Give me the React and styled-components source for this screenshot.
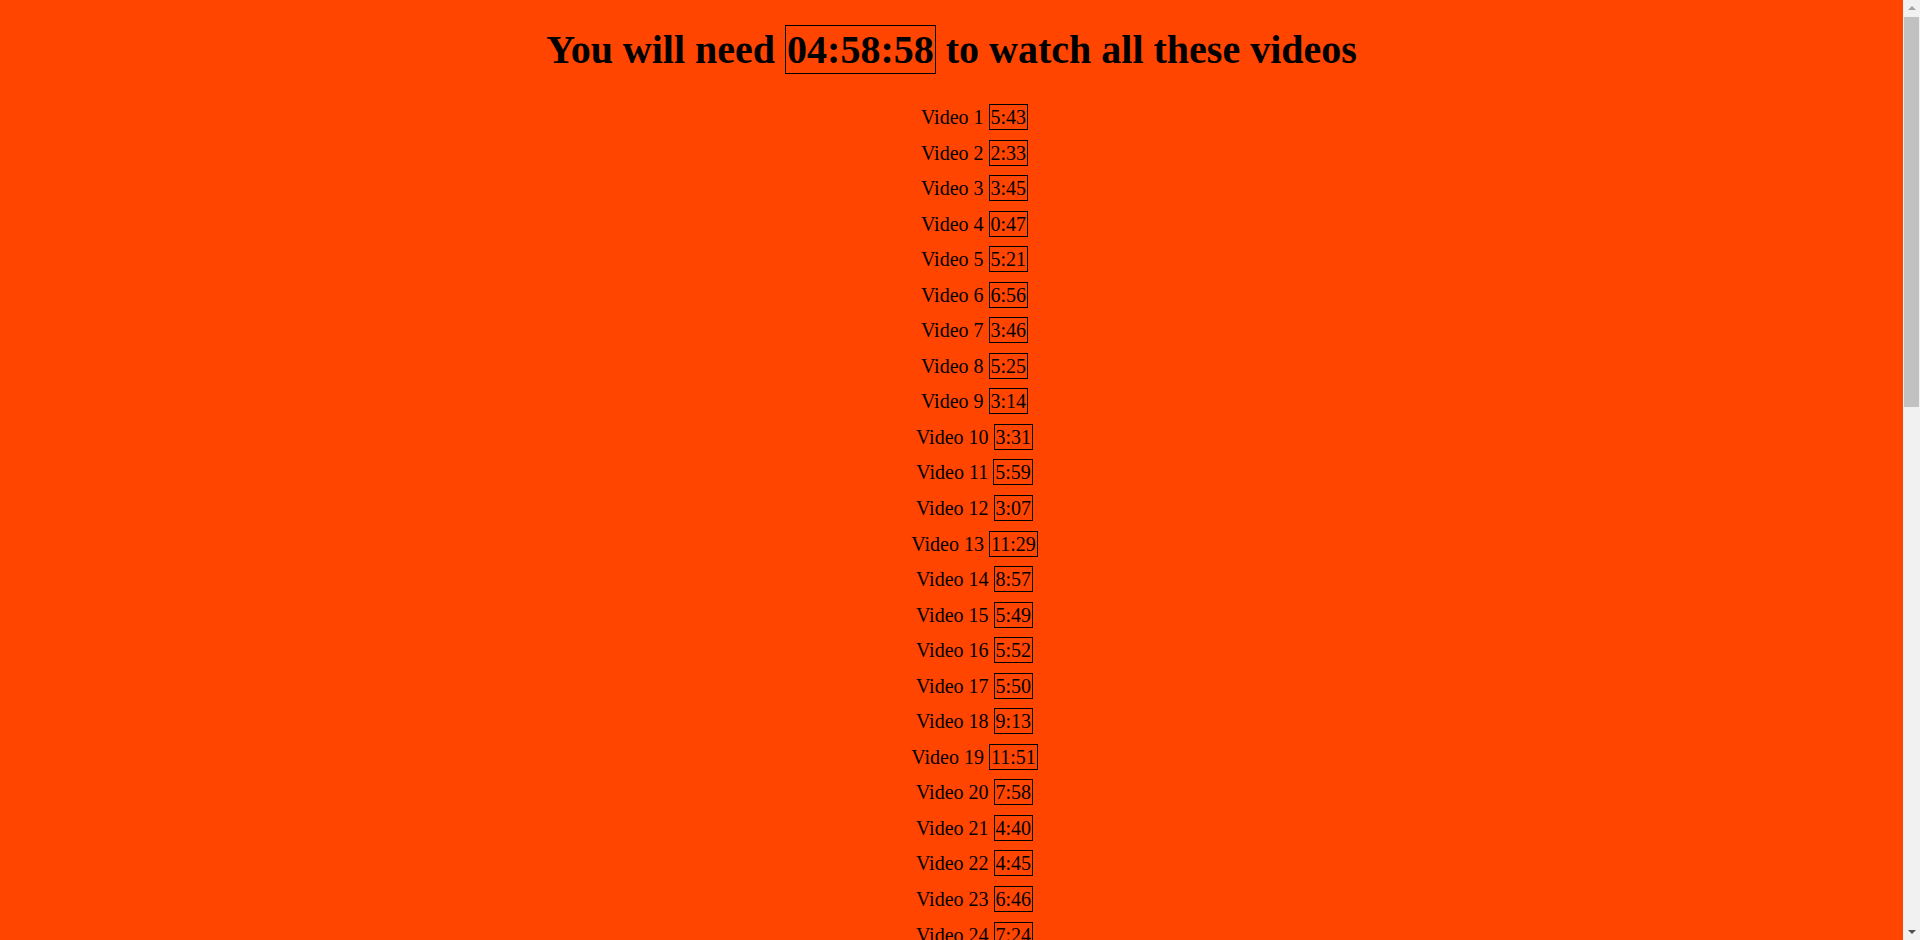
// App.jsx
import React from "react";
import styled, { createGlobalStyle } from "styled-components";

const GlobalStyle = createGlobalStyle`
  body {
    margin: 8px;
    padding-right: 17px;
    background: #ff4500;
    font-family: "Liberation Serif", "Times New Roman", serif;
    color: #000;
  }
`;

const Page = styled.main`
  text-align: center;
`;

const Title = styled.h1`
  font-size: 40px;
  font-weight: bold;
  margin: 18px 0 27px;
  line-height: normal;
`;

const TimeBox = styled.span`
  border: 1px solid #000;
  padding: 1px 1px;
`;

const List = styled.ul`
  list-style: none;
  margin: 0;
  padding-left: 46px;
  font-size: 20px;
`;

const Row = styled.li`
  line-height: 35.55px;
`;

/* window scrollbar as seen in the capture */
const ScrollRail = styled.div`
  position: fixed;
  top: 0;
  right: 0;
  width: 17px;
  height: 100vh;
  background: #f1f1f1;
  display: flex;
  flex-direction: column;
  align-items: center;
`;

const Arrow = styled.div`
  width: 0;
  height: 0;
  margin: 6px 0;
  border-left: 4px solid transparent;
  border-right: 4px solid transparent;
  ${(p) =>
    p.$down
      ? "border-top: 4px solid #505050; margin-top: auto;"
      : "border-bottom: 4px solid #a3a3a3;"}
`;

const Thumb = styled.div`
  width: 15px;
  height: 390px;
  margin-top: 1px;
  background: #c1c1c1;
`;

const durations = [
  "5:43", "2:33", "3:45", "0:47", "5:21", "6:56", "3:46", "5:25", "3:14", "3:31",
  "5:59", "3:07", "11:29", "8:57", "5:49", "5:52", "5:50", "9:13", "11:51", "7:58",
  "4:40", "4:45", "6:46", "7:24", "4:12", "6:03", "2:58", "5:17", "3:39", "7:05",
  "4:26", "1:54", "6:31", "3:22", "5:08", "9:47", "2:16", "4:55", "3:03", "6:18",
  "5:36", "2:41", "4:04", "8:12", "3:50", "1:27", "5:44", "4:33", "2:09", "6:42",
  "3:16", "4:48", "5:02", "2:37", "3:58", "4:21", "12:23",
];

const toSeconds = (s) => {
  const [m, sec] = s.split(":").map(Number);
  return m * 60 + sec;
};

const pad = (n) => String(n).padStart(2, "0");

const formatTotal = (total) => {
  const h = Math.floor(total / 3600);
  const m = Math.floor((total % 3600) / 60);
  const s = total % 60;
  return `${pad(h)}:${pad(m)}:${pad(s)}`;
};

const App = () => {
  const total = durations.reduce((sum, d) => sum + toSeconds(d), 0);

  return (
    <Page>
      <GlobalStyle />
      <Title>
        You will need <TimeBox>{formatTotal(total)}</TimeBox> to watch all
        these videos
      </Title>
      <List>
        {durations.map((d, i) => (
          <Row key={i}>
            Video {i + 1} <TimeBox>{d}</TimeBox>
          </Row>
        ))}
      </List>
      <ScrollRail aria-hidden="true">
        <Arrow />
        <Thumb />
        <Arrow $down />
      </ScrollRail>
    </Page>
  );
};

export default App;
